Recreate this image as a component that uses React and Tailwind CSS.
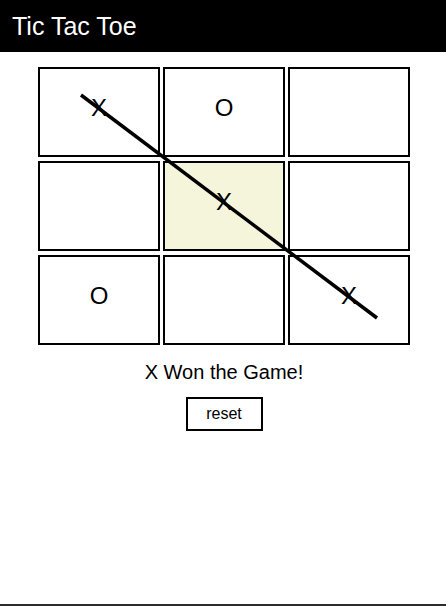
import React, { useState } from "react";

const lines = [
  [0, 1, 2],
  [3, 4, 5],
  [6, 7, 8],
  [0, 3, 6],
  [1, 4, 7],
  [2, 5, 8],
  [0, 4, 8],
  [2, 4, 6],
];

const findWinner = (board) => {
  for (const [a, b, c] of lines) {
    if (board[a] && board[a] === board[b] && board[a] === board[c]) {
      return board[a];
    }
  }
  return null;
};

const start = ["X", "O", null, null, "X", null, "O", null, "X"];

const App = () => {
  const [board, setBoard] = useState(start);
  const winner = findWinner(board);

  const play = (i) => {
    if (board[i] || winner) return;
    const count = board.filter(Boolean).length;
    const next = [...board];
    next[i] = count % 2 === 0 ? "X" : "O";
    setBoard(next);
  };

  return (
    <div className="h-[606px] flex flex-col bg-white font-['Liberation_Sans',Arial,sans-serif] text-black">
      <header className="h-[52px] bg-black flex items-center px-3">
        <h1 className="text-[25px] text-white leading-none">Tic Tac Toe</h1>
      </header>

      <main className="flex-1 flex flex-col items-center pt-[15px] pl-[2px]">
        <div className="relative grid grid-cols-[122px_122px_122px] grid-rows-[90px_90px_90px] gap-x-[3px] gap-y-[4px]">
          {board.map((cell, i) => (
            <button
              key={i}
              onClick={() => play(i)}
              className={`border-2 border-black flex items-center justify-center pb-2 text-[24px] ${
                i === 4 ? "bg-[#f5f5dc]" : "bg-white"
              }`}
            >
              {cell}
            </button>
          ))}
          {winner && (
            <svg
              className="absolute inset-0 pointer-events-none"
              width="372"
              height="278"
              viewBox="0 0 372 278"
            >
              <line x1="43" y1="28" x2="339" y2="251" stroke="black" strokeWidth="3.5" />
            </svg>
          )}
        </div>

        <p className="mt-[12px] text-[20px]">{winner ? `${winner} Won the Game!` : "\u00a0"}</p>

        <button
          onClick={() => setBoard(Array(9).fill(null))}
          className="mt-[10px] w-[77px] h-[34px] border-2 border-black text-[16px] bg-white"
        >
          reset
        </button>
      </main>

      <div className="h-[2px] bg-[#2b2b2b]" />
    </div>
  );
};

export default App;
